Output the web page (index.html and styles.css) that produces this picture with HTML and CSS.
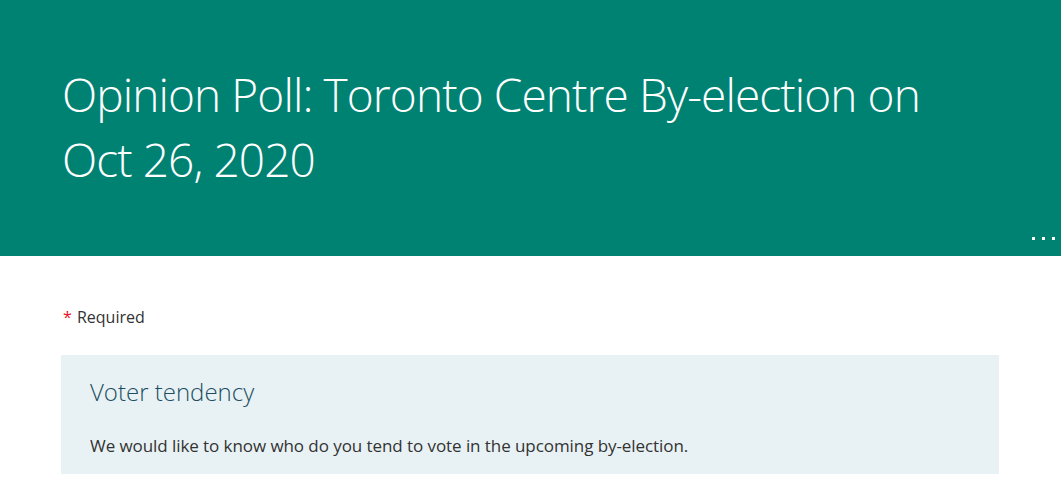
FILE: index.html
```html
<!DOCTYPE html>
<html lang="en">
<head>
<meta charset="utf-8">
<title>Opinion Poll</title>
<link rel="stylesheet" href="styles.css">
</head>
<body>
<header class="banner">
  <h1 class="title">Opinion Poll: Toronto Centre By-election on Oct 26, 2020</h1>
  <button class="more" aria-label="More options"><span></span><span></span><span></span></button>
</header>
<main class="content">
  <p class="required"><span class="star">*</span> Required</p>
  <section class="section-card">
    <h2 class="section-title">Voter tendency</h2>
    <p class="section-desc">We would like to know who do you tend to vote in the upcoming by-election.</p>
  </section>
</main>
</body>
</html>
```
FILE: styles.css
```css
html, body {
  margin: 0;
  padding: 0;
  background: #ffffff;
  font-family: "Open Sans", "Noto Sans", sans-serif;
}
.banner {
  position: relative;
  background: #008272;
  height: 256px;
  box-sizing: border-box;
  padding: 62px 100px 0 62px;
}
.title {
  margin: 0;
  color: #ffffff;
  font-weight: 300;
  font-size: 46px;
  line-height: 65px;
  letter-spacing: -0.9px;
}
.more {
  position: absolute;
  right: 6px;
  bottom: 16px;
  display: flex;
  gap: 7px;
  background: none;
  border: 0;
  padding: 0;
}
.more span {
  width: 3px;
  height: 3px;
  background: #ffffff;
}
.content {
  padding: 0 62px 0 61px;
}
.required {
  margin: 50px 0 0 2px;
  font-size: 16px;
  color: #333333;
  line-height: 22px;
}
.star {
  color: #e81123;
  margin-right: 1px;
}
.section-card {
  margin-top: 27px;
  width: 938px;
  box-sizing: border-box;
  background: #e8f2f4;
  padding: 20px 29px 16px;
}
.section-title {
  margin: 0;
  font-weight: 300;
  font-size: 24px;
  line-height: 34px;
  color: #1c4e61;
}
.section-desc {
  margin: 25px 0 0;
  font-size: 17px;
  line-height: 24px;
  letter-spacing: -0.07px;
  color: #333333;
}
```
